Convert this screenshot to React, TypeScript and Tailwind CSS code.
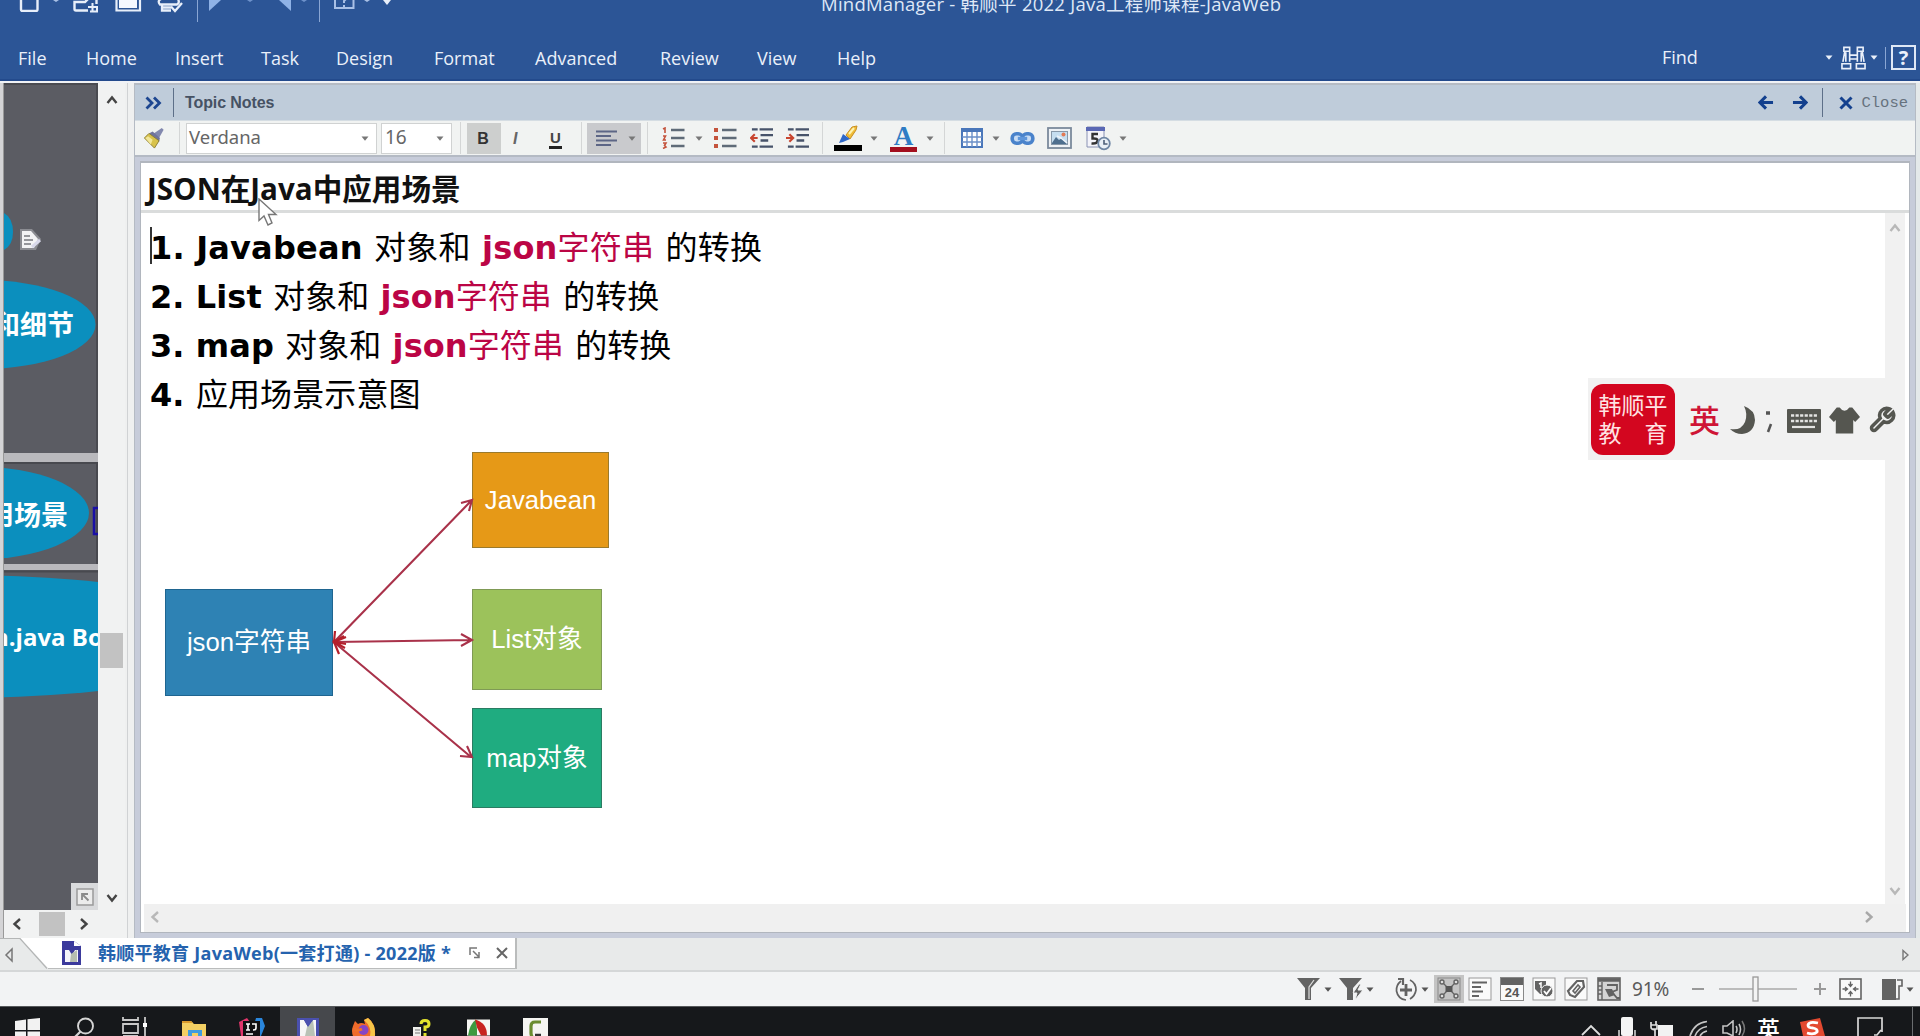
import React from "react";

const UI = "font-['Open_Sans','Noto_Sans_CJK_SC',sans-serif]";

type IconProps = { className: string; box: string; children: React.ReactNode };

function Icon({ className, box, children }: IconProps) {
  return (
    <svg className={"block shrink-0 " + className} viewBox={box} fill="none">
      {children}
    </svg>
  );
}

function Caret({ className, color = "#555" }: { className: string; color?: string }) {
  return (
    <Icon className={"h-[5px] w-[8px] " + className} box="0 0 8 5">
      <path d="M0.5 0.5h7L4 4.8z" fill={color} />
    </Icon>
  );
}

function Chevron({ className, d, color = "#444" }: { className: string; d: string; color?: string }) {
  return (
    <Icon className={"h-[12px] w-[12px] " + className} box="0 0 12 12">
      <path d={d} stroke={color} strokeWidth="2.4" />
    </Icon>
  );
}

const UP = "M1.5 9L6 3.5L10.5 9";
const DOWN = "M1.5 3L6 8.5L10.5 3";
const LEFT = "M9 1L3.5 6L9 11";
const RIGHT = "M3 1L8.5 6L3 11";

function TitleBar() {
  return (
    <div className="flex h-[24px] shrink-0 items-start">
      <Icon className="ml-[19px] h-[12px] w-[21px]" box="0 0 21 12">
        <path d="M2 -4V9.5Q2 11 3.500 11H17Q18.500 11 18.500 9.500V-4" stroke="#e8effa" strokeWidth="2.400" />
      </Icon>
      <Icon className="ml-[12px] h-[3px] w-[8px]" box="0 0 8 3"><path d="M1 0h6L4 2z" fill="#a9c0e6" /></Icon>
      <Icon className="ml-[13px] h-[13px] w-[28px]" box="0 0 28 13">
        <path d="M15 10.500H3Q1.500 10.500 1.500 9V2H12L15 -1M23.500 0V4" stroke="#e8effa" strokeWidth="2.400" />
        <path d="M19.500 3V11.500M15 7H24V11.500H17" stroke="#e8effa" strokeWidth="2" />
      </Icon>
      <Icon className="ml-[14px] h-[12px] w-[27px]" box="0 0 27 12">
        <path d="M1.500 -2V10.500H25V-2" stroke="#e8effa" strokeWidth="2.200" />
        <path d="M4 0h18v8H4z" fill="#f4f8ff" />
      </Icon>
      <Icon className="ml-[15px] h-[13px] w-[28px]" box="0 0 28 13">
        <path d="M4 -1Q0 1 3 4.500H20Q23 3 21 -1M5 4V10.500H14M6 7.500H14M14 6.500L18 11L25 3" stroke="#e8effa" strokeWidth="2.300" />
      </Icon>
      <div className="ml-[12px] h-[22px] w-px bg-[#8aa6d4]" />
      <Icon className="ml-[11px] h-[12px] w-[13px]" box="0 0 13 12"><path d="M0 0H12L0 11z" fill="#8fb2e6" /></Icon>
      <Icon className="ml-[24px] h-[3px] w-[8px]" box="0 0 8 3"><path d="M1 0h6L4 2z" fill="#6f92cc" /></Icon>
      <Icon className="ml-[25px] h-[12px] w-[12px]" box="0 0 12 12"><path d="M12 0H0L12 11z" fill="#8fb2e6" /></Icon>
      <Icon className="ml-[9px] h-[3px] w-[8px]" box="0 0 8 3"><path d="M1 0h6L4 2z" fill="#6f92cc" /></Icon>
      <div className="ml-[11px] h-[22px] w-px bg-[#8aa6d4]" />
      <Icon className="ml-[14px] h-[10px] w-[21px]" box="0 0 21 10">
        <path d="M1 -2V8H19.500V-2M10 5V7M10 3V1L12 -1" stroke="#a9c0e6" strokeWidth="2" />
      </Icon>
      <Icon className="ml-[8px] h-[3px] w-[8px]" box="0 0 8 3"><path d="M1 0h6L4 2z" fill="#a9c0e6" /></Icon>
      <Icon className="ml-[12px] h-[5px] w-[8px]" box="0 0 8 5"><path d="M0 0h8L4 5z" fill="#e8effa" /></Icon>
      <div className={"-mt-[9px] ml-[430px] whitespace-nowrap text-[18.500px] leading-[26px] tracking-[0.250px] text-[#dfe8f6] " + UI}>
        MindManager - 韩顺平 2022 Java工程师课程-JavaWeb
      </div>
    </div>
  );
}

function MenuBar() {
  return (
    <div className={"flex h-[57px] shrink-0 items-center pl-[18px] pt-[11px] text-[18px] text-[#eaf0fa] whitespace-nowrap " + UI}>
      <div className="w-[68px]">File</div>
      <div className="w-[89px]">Home</div>
      <div className="w-[86px]">Insert</div>
      <div className="w-[75px]">Task</div>
      <div className="w-[98px]">Design</div>
      <div className="w-[101px]">Format</div>
      <div className="w-[125px]">Advanced</div>
      <div className="w-[97px]">Review</div>
      <div className="w-[80px]">View</div>
      <div className="w-[80px]">Help</div>
      <div className="-mt-[2px] ml-[745px] w-[163px]">Find</div>
      <Caret className="-mt-[1px]" color="#eaf0fa" />
      <Icon className="-mt-[1px] ml-[8px] h-[24px] w-[25px]" box="0 0 26 24">
        <path d="M3 1h6v4H3zM17 1h6v4h-6zM4 5L2 16M9 5V16M17 5V16M22 5L24 16M1 18h9v5H1zM16 18h9v5h-9zM9 9h8M9 13h8M5 6v10M21 6v10" stroke="#eaf0fa" strokeWidth="1.700" />
      </Icon>
      <Caret className="-mt-[1px] ml-[4px]" color="#eaf0fa" />
      <div className="-mt-[1px] ml-[7px] h-[22px] w-px bg-[#8aa6d4]" />
      <div className="-mt-[1px] ml-[5px] flex h-[25px] w-[25px] items-center justify-center border-2 border-[#dfe8f6] font-['Open_Sans',sans-serif] text-[20px] font-bold leading-none">?</div>
    </div>
  );
}

function MapCanvas() {
  return (
    <div className="flex w-[123px] shrink-0 flex-col">
      <div className="flex h-[827px]">
        <div className="relative w-[94px] shrink-0 overflow-hidden bg-[#5b5c63] font-['Open_Sans','Noto_Sans_CJK_SC',sans-serif] font-bold text-white">
          <svg className="absolute left-0 top-0 h-[827px] w-[94px]" viewBox="4 83 94 827" fill="none">
            <path d="M4 84H98M97 84V452" stroke="#4a4b51" strokeWidth="2" />
            <path d="M4 213Q13 218 13 232Q13 245 4 250z" fill="#0b8fbe" />
            <ellipse cx="-18" cy="324.500" rx="113.500" ry="44.500" fill="#0b8fbe" />
            <rect x="4" y="453" width="94" height="9" fill="#b9b9bd" />
            <path d="M4 463H97V565" stroke="#48494f" strokeWidth="2" />
            <ellipse cx="-24" cy="513" rx="113" ry="46.500" fill="#0b8fbe" />
            <rect x="4" y="564" width="94" height="6" fill="#b9b9bd" />
            <path d="M4 571.500H98" stroke="#48494f" strokeWidth="2" />
            <ellipse cx="-40" cy="636.500" rx="300" ry="61.500" fill="#0b8fbe" />
            <path d="M98 508H94V534H98" stroke="#1a10a6" strokeWidth="2.500" />
            <path d="M20 229H32L41 239L36 250H20z" fill="#8b8c92" />
            <path d="M22 231H31L38 239L34 248H22z" fill="#f3f3f5" />
            <path d="M24 236H30M24 240H33M24 244H31" stroke="#77787e" strokeWidth="1.500" />
            <path d="M32 247L40 240" stroke="#d8d8ea" strokeWidth="3" />
          </svg>
          <div className="absolute right-[24px] top-[224px] whitespace-nowrap text-[27px] leading-[36px]">和细节</div>
          <div className="absolute right-[30px] top-[414px] whitespace-nowrap text-[27px] leading-[36px]">用场景</div>
          <div className="absolute left-[-11px] top-[538px] whitespace-nowrap text-[24px] leading-[32px]">n.java Bo</div>
          <div className="absolute bottom-0 right-0 flex h-[27px] w-[27px] items-center justify-center bg-[#d9dadc]">
            <Icon className="h-[18px] w-[18px]" box="0 0 18 18">
              <rect x="1" y="1" width="16" height="16" stroke="#9a9a9a" strokeWidth="1.500" fill="#ececec" />
              <path d="M6 12V6H12M6 6L12.500 12.500" stroke="#8a8a8a" strokeWidth="1.800" />
            </Icon>
          </div>
        </div>
        <div className="flex w-[27px] flex-col items-center bg-[#f1f2f2] pt-[11px]">
          <Chevron className="" d={UP} />
          <div className="mt-[527px] h-[35px] w-[23px] bg-[#c2c2c2]" />
          <Chevron className="mt-[224px]" d={DOWN} />
        </div>
      </div>
      <div className="flex h-[28px] items-center bg-[#f1f2f2] pl-[7px]">
        <Chevron className="" d={LEFT} />
        <div className="ml-[16px] h-[24px] w-[26px] bg-[#c2c2c2]" />
        <Chevron className="ml-[13px]" d={RIGHT} />
      </div>
    </div>
  );
}

function NotesHeader() {
  return (
    <div className="flex h-[36px] shrink-0 items-center border-b border-[#d5dde3] bg-[#bfccda]">
      <Icon className="ml-[10px] h-[14px] w-[17px]" box="0 0 17 14">
        <path d="M1.500 1.500L7 7L1.500 12.500M9 1.500L14.500 7L9 12.500" stroke="#1d4690" strokeWidth="2.800" />
      </Icon>
      <div className="ml-[11px] h-[29px] w-px bg-[#5d6f88]" />
      <div className="ml-[11px] whitespace-nowrap font-['Liberation_Sans',sans-serif] text-[16px] font-bold tracking-[-0.100px] text-[#465264]">Topic Notes</div>
      <div className="flex-1" />
      <Icon className="h-[15px] w-[16px]" box="0 0 17 16"><path d="M16 8H2.500M8.500 1.500L2 8L8.500 14.500" stroke="#13408e" strokeWidth="3.200" /></Icon>
      <Icon className="ml-[18px] h-[15px] w-[16px]" box="0 0 17 16"><path d="M1 8H14.500M8.500 1.500L15 8L8.500 14.500" stroke="#13408e" strokeWidth="3.200" /></Icon>
      <div className="ml-[14px] h-[29px] w-px bg-[#5d6f88]" />
      <Icon className="ml-[16px] h-[14px] w-[14px]" box="0 0 14 14"><path d="M1.500 1.500L12.500 12.500M12.500 1.500L1.500 12.500" stroke="#13408e" strokeWidth="3" /></Icon>
      <div className="ml-[8px] mr-[7px] mt-[2px] font-['Liberation_Mono',monospace] text-[15.500px] text-[#66727e]">Close</div>
    </div>
  );
}

function Sep({ className }: { className: string }) {
  return <div className={"h-[32px] w-px shrink-0 bg-[#d4d6d6] " + className} />;
}

function NotesToolbar() {
  return (
    <div className="flex h-[36px] shrink-0 items-center border-b-2 border-[#b4bac4] bg-[#f1f3f2]">
      <Icon className="ml-[8px] h-[22px] w-[22px]" box="0 0 23 24">
        <path d="M20 1L22 3L17 12L10 8z" fill="#8288ae" />
        <path d="M10 5L18 12L17 16L6 7z" fill="#6f739c" />
        <path d="M6 7L17 15L12 23L1 12z" fill="#d8c24a" stroke="#8a7c30" />
        <path d="M5 10L10 14L8 19L2 12z" fill="#f2e79a" />
      </Icon>
      <Sep className="ml-[14px]" />
      <div className="ml-[6px] flex h-[31px] w-[191px] shrink-0 items-center border border-[#d0d2d2] bg-white pb-[2px] pl-[2px] font-['Noto_Sans',sans-serif] text-[18.500px] text-[#666]">
        Verdana<Caret className="ml-auto mr-[7px] mt-[2px]" color="#777" />
      </div>
      <div className="ml-[4px] flex h-[31px] w-[71px] shrink-0 items-center border border-[#d0d2d2] bg-white pb-[2px] pl-[3px] font-['Noto_Sans',sans-serif] text-[19px] text-[#666]">
        16<Caret className="ml-auto mr-[7px] mt-[2px]" color="#777" />
      </div>
      <Sep className="ml-[8px]" />
      <div className="ml-[6px] flex h-[31px] w-[34px] items-center justify-center bg-[#cdcfce] pr-[2px] pt-[2px] font-['Liberation_Sans',sans-serif] text-[16px] font-bold text-[#333]">B</div>
      <div className="ml-[12px] mt-[1px] w-[8px] font-['Liberation_Sans',sans-serif] text-[16px] font-bold italic text-[#666]">I</div>
      <div className="ml-[28px] mt-[4px] flex h-[18px] w-[13px] items-end justify-center border-b-[3px] border-[#222] font-['Liberation_Sans',sans-serif] text-[15px] font-bold leading-[16px] text-[#444]">U</div>
      <Sep className="ml-[19px]" />
      <div className="ml-[5px] flex h-[31px] w-[54px] shrink-0 items-center bg-[#c9cacd] pl-[9px]">
        <Icon className="h-[17px] w-[22px]" box="0 0 22 17"><path d="M0 1.500H21M0 6H15M0 10.500H21M0 15H15" stroke="#5d6686" strokeWidth="2.200" /></Icon>
        <Caret className="ml-[10px]" color="#777" />
      </div>
      <Sep className="ml-[6px]" />
      <Icon className="ml-[14px] h-[22px] w-[23px]" box="0 0 23 22">
        <path d="M9 3H22.500M9 11H22.500M9 19H22.500" stroke="#5f6b78" strokeWidth="2.600" />
        <path d="M1 2L3 1V6M1 9H3.500L1.500 13H4M1 16H4L2.500 18.500L4 20L1 21.500" stroke="#c4533c" strokeWidth="1.600" />
      </Icon>
      <Caret className="ml-[10px]" color="#777" />
      <Icon className="ml-[11px] h-[22px] w-[23px]" box="0 0 23 22">
        <path d="M8 3H22.500M8 11H22.500M8 19H22.500" stroke="#5f6b78" strokeWidth="2.600" />
        <path d="M0 1h4v4H0zM0 9h4v4H0zM0 17h4v4H0z" fill="#c4533c" />
      </Icon>
      <Icon className="ml-[13px] h-[22px] w-[23px]" box="0 0 24 22">
        <path d="M2 2H8M10 2H24M11 8H24M11 13.500H19M2 20H8M10 20H24" stroke="#47536a" strokeWidth="2.600" />
        <path d="M8 11H1.500M5 7L1 11L5 15" stroke="#c8452f" strokeWidth="2.200" />
      </Icon>
      <Icon className="ml-[13px] h-[22px] w-[23px]" box="0 0 24 22">
        <path d="M2 2H8M10 2H24M11 8H24M11 13.500H19M2 20H8M10 20H24" stroke="#47536a" strokeWidth="2.600" />
        <path d="M0 11H6.500M3.500 7L7.500 11L3.500 15" stroke="#c8452f" strokeWidth="2.200" />
      </Icon>
      <Sep className="ml-[13px]" />
      <Icon className="ml-[11px] h-[27px] w-[28px]" box="0 0 28 27">
        <path d="M12 10L18 2L23 1L22 5L16 14z" fill="#f0bd38" stroke="#c98f22" />
        <path d="M15 9L20 3" stroke="#fff3b0" strokeWidth="2" />
        <path d="M9 9L16 14L9 17L5 18z" fill="#2f68c8" />
        <rect x="0" y="20" width="28" height="6" fill="#000" />
      </Icon>
      <Caret className="ml-[8px]" color="#777" />
      <div className="ml-[12px] flex h-[27px] w-[27px] shrink-0 flex-col items-center border-b-[5px] border-[#a30f1e] font-['Liberation_Serif',serif] text-[27px] font-bold leading-[22px] text-[#2f7cc4]">A</div>
      <Caret className="ml-[9px]" color="#777" />
      <Sep className="ml-[10px]" />
      <Icon className="ml-[16px] h-[20px] w-[22px]" box="0 0 22 20">
        <rect x="1" y="1" width="20" height="18" fill="#fff" stroke="#4a77ba" strokeWidth="2" />
        <rect x="1" y="1" width="20" height="3" fill="#4a77ba" />
        <path d="M6 4V19M11 4V19M16 4V19M1 9H21M1 14H21" stroke="#6b90c8" strokeWidth="1.400" />
      </Icon>
      <Caret className="ml-[9px]" color="#777" />
      <Icon className="ml-[10px] h-[15px] w-[25px]" box="0 0 26 16">
        <rect x="2" y="3" width="11" height="10" rx="4.500" stroke="#4a83cb" strokeWidth="3.800" fill="#c8dcf4" />
        <rect x="13" y="3" width="11" height="10" rx="4.500" stroke="#4a83cb" strokeWidth="3.800" fill="#c8dcf4" />
        <path d="M8 8H18" stroke="#5f96da" strokeWidth="3.600" />
      </Icon>
      <Icon className="ml-[12px] h-[22px] w-[25px]" box="0 0 25 22">
        <rect x="1" y="1" width="23" height="20" fill="#eef2f6" stroke="#7b8a9c" strokeWidth="1.800" />
        <rect x="4.500" y="4.500" width="16" height="13" fill="#c6def0" stroke="#8798a9" />
        <path d="M5 16L9 10L12 13L15 11L20 17H5z" fill="#4e6f8f" />
        <path d="M10 9L14 11L20 16" stroke="#eef4fa" strokeWidth="1.500" />
        <circle cx="16.500" cy="7.500" r="2" fill="#e27a55" />
      </Icon>
      <Icon className="ml-[14px] h-[25px] w-[25px]" box="0 0 25 25">
        <path d="M1 1H18V21H1z" fill="#f4f4fa" stroke="#8a92b4" />
        <rect x="0" y="1" width="19" height="4" fill="#5a68b4" />
        <path d="M12 8H6.500V12.500Q12 12 11.500 15Q11 18 5.500 17.500" stroke="#333" strokeWidth="2.400" />
        <circle cx="18" cy="17.500" r="5.800" fill="#e9f0f7" stroke="#6f86a4" strokeWidth="1.800" />
        <path d="M18 14V18H21.500" stroke="#4d5f78" strokeWidth="1.600" />
      </Icon>
      <Caret className="ml-[8px]" color="#777" />
    </div>
  );
}

function Hl({ children }: { children: React.ReactNode }) {
  return <span className="text-[#bb0545]">{children}</span>;
}

function B({ children }: { children: React.ReactNode }) {
  return <span className="font-['DejaVu_Sans',sans-serif] font-bold">{children}</span>;
}

function NotesList() {
  return (
    <div className="h-[196px] whitespace-pre pl-[9px] font-['Noto_Sans_CJK_SC',sans-serif] text-[32px] font-normal leading-[49px] text-black">
      <div className="h-[49px] tracking-[0.200px]"><B>1. Javabean </B>对象和<B> <Hl>json</Hl></B><Hl>字符串</Hl><B> </B>的转换</div>
      <div className="h-[49px] tracking-[0.080px]"><B>2. List </B>对象和<B> <Hl>json</Hl></B><Hl>字符串</Hl><B> </B>的转换</div>
      <div className="h-[49px] tracking-[0.080px]"><B>3. map </B>对象和<B> <Hl>json</Hl></B><Hl>字符串</Hl><B> </B>的转换</div>
      <div className="h-[49px] tracking-[0.100px]"><B>4. </B>应用场景示意图</div>
    </div>
  );
}

function Diagram() {
  const box = "absolute flex items-center justify-center border text-white whitespace-nowrap";
  return (
    <div className="relative ml-[1px] mt-[5px] h-[400px] w-[500px] font-['Liberation_Sans','Noto_Sans_CJK_SC',sans-serif] text-[25.700px]">
      <div className={box + " left-[23px] top-[167px] h-[107px] w-[168px] border-[#1f6590] bg-[#2e82b4]"}>json字符串</div>
      <div className={box + " left-[330px] top-[30px] h-[96px] w-[137px] border-[#9a7a2c] bg-[#e69917]"}>Javabean</div>
      <div className={box + " left-[330px] top-[167px] h-[101px] w-[130px] border-[#7f9a55] bg-[#9cc25b]"}>List对象</div>
      <div className={box + " left-[330px] top-[286px] h-[100px] w-[130px] border-[#2b7c62] bg-[#1fac80]"}>map对象</div>
      <svg className="absolute left-[188px] top-[70px] h-[280px] w-[146px]" viewBox="330 492 146 280" fill="none" stroke="#a9324a" strokeWidth="2.100">
        <path d="M335 641L471 501M461 503L472 500L469 511" />
        <path d="M335 642L471 640M461 634L472 640L461 646" />
        <path d="M335 643L471 757M467 746L472 757L460 756" />
        <path d="M335 631L334 642L346 637M344 636L334 642L345 648M346 644L334 642L339 654" stroke="#b4202c" strokeWidth="2.200" />
      </svg>
    </div>
  );
}

function ImeBar() {
  return (
    <div className="absolute left-[1447px] top-[215px] flex h-[82px] w-[317px] items-center bg-[#f1f1f1]">
      <div className="ml-[3px] flex h-[71px] w-[84px] shrink-0 items-center justify-center rounded-[12px] bg-[#d3061f] font-['Noto_Sans_CJK_SC',sans-serif] text-[23px] leading-[28px] text-[#ffe3e3]">
        <div className="-mt-[2px] whitespace-pre">{"韩顺平\n教　育"}</div>
      </div>
      <div className="ml-[14px] font-['Noto_Sans_CJK_SC',sans-serif] text-[31px] font-medium leading-[40px] text-[#cf1536]">英</div>
      <Icon className="ml-[10px] mt-[2px] h-[30px] w-[26px]" box="0 0 26 30"><path d="M14 1Q25 5 25 15Q24 28 12 29Q5 29 0 24Q11 26 15 17Q18 9 14 1z" fill="#555650" /></Icon>
      <Icon className="ml-[7px] mt-[4px] h-[24px] w-[12px]" box="0 0 12 24"><path d="M3 4H7" stroke="#555" strokeWidth="3.500" /><path d="M8 15L5 23" stroke="#555" strokeWidth="2.500" /></Icon>
      <Icon className="ml-[12px] mt-[4px] h-[24px] w-[34px]" box="0 0 34 24">
        <rect width="34" height="24" rx="1" fill="#555650" />
        <path d="M4 6.500H30M4 12H30" stroke="#e4e4e2" strokeWidth="2.400" strokeDasharray="3.200 1.350" />
        <path d="M5 18H28" stroke="#e4e4e2" strokeWidth="2.200" />
      </Icon>
      <Icon className="ml-[8px] mt-[3px] h-[27px] w-[31px]" box="0 0 32 27"><path d="M8 0H11Q16 7 21 0H24L32 10L27 15L25 13V27H7V13L5 15L0 10z" fill="#555650" /></Icon>
      <Icon className="ml-[8px] mt-[2px] h-[28px] w-[28px]" box="0 0 24 24"><path d="M14.700 6.300a1 1 0 0 0 0 1.400l1.600 1.600a1 1 0 0 0 1.400 0l3.770-3.770a6 6 0 0 1-7.940 7.940l-6.910 6.910a2.120 2.120 0 0 1-3-3l6.910-6.910a6 6 0 0 1 7.940-7.940z" stroke="#555650" strokeWidth="3" /></Icon>
    </div>
  );
}

function NotesPanel() {
  return (
    <div className="flex flex-1 flex-col border border-b-0 border-t-2 border-[#b5bbc4] bg-[#c7ccda]">
      <NotesHeader />
      <NotesToolbar />
      <div className="relative mx-[5px] mb-[5px] mt-[4px] flex flex-1 flex-col border border-t-2 border-[#b1b6be] bg-white">
        <div className="flex h-[50px] shrink-0 items-center whitespace-nowrap border-b-[3px] border-[#dadcdc] pl-[6px] pt-[5px] font-['Open_Sans','Noto_Sans_CJK_SC',sans-serif] text-[29.600px] font-bold leading-[40px] text-[#111]">
          JSON在Java中应用场景
        </div>
        <div className="flex flex-1">
          <div className="flex flex-1 flex-col pt-[8px]">
            <NotesList />
            <Diagram />
          </div>
          <div className="mr-[4px] flex w-[20px] flex-col items-center justify-between bg-[#f1f1f1] pb-[7px] pt-[9px]">
            <Chevron className="" d={UP} color="#b8b8b8" />
            <Chevron className="" d={DOWN} color="#b8b8b8" />
          </div>
        </div>
        <div className="mx-[3px] flex h-[28px] shrink-0 items-center justify-between bg-[#f0f0f0] pb-[2px] pl-[5px] pr-[31px]">
          <Chevron className="" d={LEFT} color="#b8b8b8" />
          <Chevron className="" d={RIGHT} color="#a8a8a8" />
        </div>
        <div className="absolute left-[9px] top-[64px] h-[37px] w-[2px] bg-[#333]" />
        <svg className="absolute left-[117px] top-[35px] h-[29px] w-[20px]" viewBox="0 0 20 29">
          <path d="M1 1V22.500L6 18L10 27L14 25L10.500 16.500H18z" fill="#fff" stroke="#777" strokeWidth="1.400" />
        </svg>
        <ImeBar />
      </div>
    </div>
  );
}

function TabStrip() {
  return (
    <div className="flex h-[34px] shrink-0 items-start border-b-2 border-[#d5d7d8] bg-[#e8eaea]">
      <Icon className="h-[31px] w-[48px]" box="0 0 48 31">
        <path d="M20 0L48 30V0z" fill="#fff" />
        <path d="M0 .5H20L47 30.500" stroke="#b4b6b6" strokeWidth="1.200" />
        <path d="M12 11V23L6 17z" stroke="#777" strokeWidth="1.500" />
      </Icon>
      <div className="flex h-[31px] w-[469px] items-center border-b border-r-2 border-[#babcbc] bg-white">
        <Icon className="ml-[14px] h-[24px] w-[19px]" box="0 0 19 24">
          <path d="M0 0H12L19 5V24H0z" fill="#3b3a9c" />
          <path d="M12 0L19 5H12z" fill="#fff" />
          <path d="M3 9H7L10 14L13 9H16V21H3z" fill="#f4f4fa" />
          <path d="M9 13L15 9V21H8z" fill="#b6bdb0" />
        </Icon>
        <div className={"ml-[17px] w-[354px] whitespace-nowrap text-[18px] font-bold leading-[28px] tracking-[0.280px] text-[#2563ae] " + UI}>韩顺平教育 JavaWeb(一套打通) - 2022版 *</div>
        <Icon className="ml-[17px] h-[12px] w-[12px]" box="0 0 12 12"><path d="M1 8V1H8M4 4L10 10M10 5V10.500H5" stroke="#777" strokeWidth="1.500" /></Icon>
        <Icon className="ml-[15px] h-[12px] w-[12px]" box="0 0 12 12"><path d="M1 1L11 11M11 1L1 11" stroke="#666" strokeWidth="2" /></Icon>
      </div>
      <Icon className="ml-auto mr-[11px] mt-[11px] h-[12px] w-[7px]" box="0 0 7 12"><path d="M1 1.500V10.500L6 6z" stroke="#777" strokeWidth="1.400" /></Icon>
    </div>
  );
}

function StatusBar() {
  const g = "#636363";
  return (
    <div className="flex h-[34px] shrink-0 items-center bg-[#f2f3f4]">
      <Icon className="ml-[1297px] h-[22px] w-[23px]" box="0 0 23 22"><path d="M0 0H23L14 10V22H8V10z" fill={g} /><path d="M17 2L12 9V21" stroke="#ddd" strokeWidth="1.200" /></Icon>
      <Caret className="ml-[4px]" />
      <Icon className="ml-[7px] h-[22px] w-[24px]" box="0 0 24 22"><path d="M0 0H23L14 10V22H8V10z" fill={g} /><path d="M20 6L14 15H18L16 22L24 12H19L22 6z" fill={g} stroke="#f2f3f4" /></Icon>
      <Caret className="ml-[3px]" />
      <Icon className="ml-[20px] h-[24px] w-[24px]" box="0 0 24 24"><path d="M16 3Q22 6 22 13Q21 19 16 22M12 23Q4 22 2.500 14Q2 8 7 4" stroke={g} strokeWidth="1.700" /><path d="M12 7V19M6 13H18" stroke={g} strokeWidth="2.800" /><path d="M4 2H9V8" stroke={g} strokeWidth="2.200" /></Icon>
      <Caret className="ml-[3px]" />
      <div className="ml-[5px] flex h-[28px] w-[30px] items-center justify-center bg-[#c4c4c4]">
        <Icon className="h-[24px] w-[24px]" box="0 0 24 24">
          <rect x="1" y="1" width="22" height="22" stroke="#888" />
          <path d="M6 6L18 18M18 6L6 18" stroke={g} strokeWidth="1.300" />
          <rect x="8.500" y="9" width="7" height="6" fill="#555" />
          <g fill="#ddd" stroke={g} strokeWidth="1.400"><circle cx="5" cy="5" r="2" /><circle cx="19" cy="5" r="2" /><circle cx="5" cy="19" r="2" /><circle cx="19" cy="19" r="2" /></g>
        </Icon>
      </div>
      <Icon className="ml-[4px] h-[24px] w-[24px]" box="0 0 24 24"><rect x="1" y="1" width="22" height="22" stroke="#999" fill="#fafafa" /><path d="M4 5.500H19M4 10H13M4 14.500H15M4 19H11" stroke={g} strokeWidth="2" /></Icon>
      <div className="ml-[8px] flex h-[24px] w-[24px] flex-col border border-[#888] bg-[#fafafa]">
        <div className="h-[8px] bg-[#636363]" />
        <div className="text-center font-['Liberation_Sans',sans-serif] text-[13px] font-bold leading-[15px] text-[#555]">24</div>
      </div>
      <Icon className="ml-[8px] h-[24px] w-[24px]" box="0 0 24 24"><rect x="1" y="1" width="22" height="22" stroke="#999" fill="#fafafa" /><path d="M3 4H14V17H8L3 12z" fill={g} /><circle cx="15" cy="14" r="6" fill={g} stroke="#fafafa" /><path d="M12 14L14.500 17L19 11" stroke="#fff" strokeWidth="1.800" /><path d="M7 7L9 6V11" stroke="#fff" strokeWidth="1.500" /></Icon>
      <Icon className="ml-[8px] h-[24px] w-[24px]" box="0 0 24 24"><rect x="1" y="1" width="22" height="22" stroke="#999" fill="#fafafa" /><path d="M4 14L13 4H19L20 10L11 20L6 18z" stroke={g} strokeWidth="2.200" /><path d="M9 14L14 8L16 10L11 16z" stroke={g} strokeWidth="1.600" /></Icon>
      <Icon className="ml-[9px] h-[24px] w-[24px]" box="0 0 24 24"><rect x="1" y="1" width="22" height="22" stroke={g} strokeWidth="1.600" fill="#d4d4d4" /><path d="M1 3H23" stroke={g} strokeWidth="3.500" /><path d="M5 5V23M1 9H5M1 13H5M1 17H5" stroke={g} strokeWidth="1.400" /><path d="M10 8H20V13L15 15L20 21H23" stroke={g} strokeWidth="1.800" /><path d="M8 12H15L18 18L12 20z" fill={g} /></Icon>
      <div className="ml-[11px] w-[42px] whitespace-nowrap font-['Noto_Sans',sans-serif] text-[19px] leading-none tracking-[-0.100px] text-[#5a5a5a]">91%</div>
      <Icon className="ml-[17px] h-[12px] w-[14px]" box="0 0 14 12"><path d="M1 6H13" stroke="#999" strokeWidth="2" /></Icon>
      <Icon className="ml-[14px] h-[26px] w-[78px]" box="0 0 78 26"><path d="M0 13H78" stroke="#aaa" strokeWidth="1.500" /><rect x="34" y="1" width="5" height="24" fill="#f4f4f4" stroke="#999" strokeWidth="1.300" /></Icon>
      <Icon className="ml-[16px] h-[14px] w-[14px]" box="0 0 14 14"><path d="M1 7H13M7 1V13" stroke="#999" strokeWidth="2" /></Icon>
      <Icon className="ml-[12px] h-[22px] w-[23px]" box="0 0 23 22"><rect x="1" y="1" width="21" height="20" stroke={g} strokeWidth="1.600" fill="#fafafa" /><path d="M11.500 3.500V8M9.500 6L11.500 8.500L13.500 6M11.500 18.500V14M9.500 16L11.500 13.500L13.500 16M3.500 11H8.500M6 9L8.500 11L6 13M19.500 11H14.500M17 9L14.500 11L17 13" stroke={g} strokeWidth="1.300" /></Icon>
      <Icon className="ml-[20px] h-[21px] w-[21px]" box="0 0 21 21"><rect width="14" height="21" fill={g} /><path d="M15 1H20V7H17V20H14" stroke={g} strokeWidth="1.600" /></Icon>
      <Caret className="ml-[3px]" />
    </div>
  );
}

function Taskbar() {
  return (
    <div className="flex h-[30px] shrink-0 items-start border-t border-[#55585a] bg-[#16181b]">
      <Icon className="ml-[15px] mt-[11px] h-[18px] w-[25px]" box="0 0 25 18"><path d="M0 3L11 1.500V12H0zM12.500 1.300L25 0V12H12.500zM0 13.500H11V18H0zM12.500 13.500H25V18H12.500z" fill="#f2f2f2" /></Icon>
      <Icon className="ml-[34px] mt-[9px] h-[20px] w-[22px]" box="0 0 22 20"><circle cx="11.500" cy="10" r="7.500" stroke="#d5d5d5" strokeWidth="1.900" /><path d="M6.500 15.500L1 21" stroke="#d5d5d5" strokeWidth="2.200" /></Icon>
      <Icon className="ml-[26px] mt-[10px] h-[19px] w-[26px]" box="0 0 26 19"><path d="M1 0V3H16V0M1 7H16V16H1zM1 19H16M23 0V19" stroke="#c8c8c8" strokeWidth="1.800" /><path d="M23 6V10" stroke="#fff" strokeWidth="4" /></Icon>
      <Icon className="ml-[34px] mt-[14px] h-[15px] w-[25px]" box="0 0 25 15"><path d="M0 0H9L12 3H24V15H0z" fill="#f3cf63" /><path d="M0 0H9L11 2H0z" fill="#d99a2d" /><path d="M6 9H20V15H6z" fill="#3f9be0" /><path d="M10 12H16V15H10z" fill="#f3cf63" /></Icon>
      <Icon className="ml-[32px] mt-[11px] h-[18px] w-[26px]" box="0 0 26 18"><path d="M0 4L8 0L14 8L6 18H2z" fill="#e0356b" /><path d="M17 0H23L26 8L22 18H12z" fill="#2a86dc" /><rect x="4" y="3" width="17" height="15" fill="#101012" /><path d="M7 6H11M9 6V12M7 12H11M13 6H17V10Q17 12 14 12M7 16H14" stroke="#fff" strokeWidth="1.600" /></Icon>
      <div className="ml-[15px] flex h-[29px] w-[55px] justify-center bg-[#46484c] pt-[11px]">
        <Icon className="h-[18px] w-[22px]" box="0 0 22 18"><rect width="22" height="18" fill="#4a50ae" /><path d="M3 2H7L11 9L16 2H19V18H3z" fill="#f6f6f6" /><path d="M10 9L16 2L18 18H8z" fill="#b9c2b6" /><path d="M7 2H16L11 9z" fill="#4a50ae" /></Icon>
      </div>
      <Icon className="ml-[17px] mt-[11px] h-[18px] w-[24px]" box="0 0 24 18"><path d="M1 8L3 3L6 6Q9 4 13 6L12 2L16 0Q24 6 23 18H1Q-1 13 1 8z" fill="#ef6a2b" /><path d="M12 2L16 0Q24 6 23 18H18Q20 9 12 2z" fill="#f7c548" /><circle cx="11.500" cy="12" r="5" fill="#8545c6" /><path d="M2 10Q4 14 10 11" stroke="#f0702e" strokeWidth="3" /></Icon>
      <Icon className="ml-[37px] mt-[12px] h-[17px] w-[18px]" box="0 0 18 17"><path d="M0 8H8V17H0z" fill="#f0f0ec" /><path d="M2 11H7M2 14H7" stroke="#777" /><path d="M8 5Q8 1.500 12 1.500Q16 1.500 16 5Q16 8 12 8V12M12 14V17" stroke="#e3e22d" strokeWidth="3" /></Icon>
      <Icon className="ml-[36px] mt-[12px] h-[17px] w-[23px]" box="0 0 23 16"><rect width="23" height="16" fill="#f5f5f2" /><path d="M1 16Q3 4 9 0L10 10V16z" fill="#3d9a3f" /><path d="M8 0Q20 3 20 16H14L10 8z" fill="#c8231f" /></Icon>
      <Icon className="ml-[33px] mt-[11px] h-[18px] w-[25px]" box="0 0 25 18"><rect width="25" height="18" fill="#f5f5f2" /><path d="M18 4H12Q8 4 8 8V15Q8 18 10 20" stroke="#6a8c2f" strokeWidth="3.200" /><path d="M18 17H12" stroke="#333" strokeWidth="2.500" /></Icon>
      <Icon className="ml-[1033px] mt-[17px] h-[12px] w-[20px]" box="0 0 20 12"><path d="M1 11L10 2L19 11" stroke="#ddd" strokeWidth="1.800" /></Icon>
      <Icon className="ml-[17px] mt-[10px] h-[19px] w-[18px]" box="0 0 18 19"><rect x="3" width="12" height="19" rx="2" fill="#f4f4f4" /><path d="M1 13V19M17 13V19" stroke="#ddd" strokeWidth="1.500" /></Icon>
      <Icon className="ml-[13px] mt-[14px] h-[15px] w-[26px]" box="0 0 26 15"><path d="M2 1V6Q2 9 6 8.500V15M7 0V4M2 4H8V8H3" stroke="#ddd" strokeWidth="1.700" /><rect x="9" y="4" width="15" height="11" fill="#f2f2f2" /></Icon>
      <Icon className="ml-[14px] mt-[13px] h-[16px] w-[21px]" box="0 0 21 16"><path d="M1 16Q5 3 18 1.500M6 16Q9 8 18 6.500M11 16Q13 12 18 11" stroke="#c4c4c4" strokeWidth="1.700" /></Icon>
      <Icon className="ml-[12px] mt-[13px] h-[16px] w-[24px]" box="0 0 24 16"><path d="M1 6H5L11 1V16L5 13H1zM14 6Q16 9 14 13M17 4Q20 9 17 15" stroke="#c4c4c4" strokeWidth="1.600" /><path d="M20 1Q25 9 20 16" stroke="#777" strokeWidth="1.500" /></Icon>
      <div className="ml-[11px] mt-[7px] h-[22px] font-['Noto_Sans_CJK_SC',sans-serif] text-[23px] font-medium leading-[28px] text-white">英</div>
      <Icon className="ml-[20px] mt-[11px] h-[18px] w-[25px]" box="0 0 25 18"><path d="M0 4L20 0L25 18H3z" fill="#e34930" /><path d="M18 5Q9 3 8 7Q8 10 13 10Q18 11 17 14Q14 17 7 15" stroke="#fff" strokeWidth="2.800" /></Icon>
      <Icon className="ml-[32px] mt-[10px] h-[19px] w-[27px]" box="0 0 27 19"><path d="M1 19V1H25V15M17 18H20L24 13" stroke="#d8d8d8" strokeWidth="1.700" /></Icon>
      <div className="ml-[28px] h-[29px] w-px bg-[#6a6d70]" />
    </div>
  );
}

export default function App() {
  return (
    <div className="flex h-[1036px] w-[1920px] flex-col overflow-hidden bg-[#f1f2f2]">
      <div className="flex h-[81px] shrink-0 flex-col bg-[#2c5596] shadow-[inset_0_-2px_0_#234a8c]">
        <TitleBar />
        <MenuBar />
      </div>
      <div className="flex h-[857px] shrink-0 border-t-2 border-[#f0f2f6] bg-[#eff0f0]">
        <div className="w-[4px] shrink-0 border-r border-[#999] bg-[#d4d4d6]" />
        <MapCanvas />
        <div className="mr-[6px] w-px bg-[#d0d2d4]" />
        <NotesPanel />
        <div className="w-[4px] shrink-0 bg-[#e4e9ea]" />
      </div>
      <TabStrip />
      <StatusBar />
      <Taskbar />
    </div>
  );
}
